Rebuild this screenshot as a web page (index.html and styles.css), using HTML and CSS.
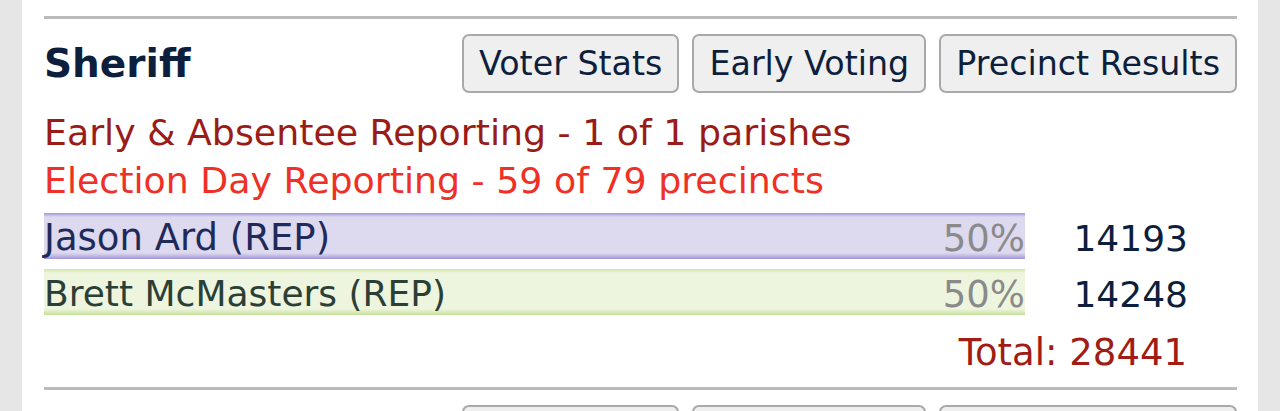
FILE: index.html
```html
<!DOCTYPE html>
<html lang="en">
<head>
<meta charset="utf-8">
<title>Sheriff</title>
<link rel="stylesheet" href="styles.css">
</head>
<body>
<div class="page">
  <section class="race">
    <div class="race-head">
      <h2 class="race-title">Sheriff</h2>
      <div class="race-buttons">
        <button class="btn">Voter Stats</button>
        <button class="btn">Early Voting</button>
        <button class="btn">Precinct Results</button>
      </div>
    </div>
    <div class="reporting early">Early &amp; Absentee Reporting - 1 of 1 parishes</div>
    <div class="reporting eday">Election Day Reporting - 59 of 79 precincts</div>
    <div class="results">
      <div class="bar bar-purple">
        <span class="cand">Jason Ard (REP)</span>
        <span class="pct">50%</span>
      </div>
      <div class="votes">14193</div>
      <div class="bar bar-green">
        <span class="cand">Brett McMasters (REP)</span>
        <span class="pct">50%</span>
      </div>
      <div class="votes">14248</div>
      <div class="total">Total: 28441</div>
    </div>
  </section>
  <section class="race">
    <div class="race-head">
      <h2 class="race-title"></h2>
      <div class="race-buttons">
        <button class="btn">Voter Stats</button>
        <button class="btn">Early Voting</button>
        <button class="btn">Precinct Results</button>
      </div>
    </div>
  </section>
</div>
</body>
</html>
```
FILE: styles.css
```css
html, body {
  margin: 0;
  padding: 0;
  background: #e6e6e6;
  height: 100%;
  overflow: hidden;
}
body {
  font-family: "DejaVu Sans", Verdana, sans-serif;
}
.page {
  margin: 0 22px;
  background: #ffffff;
  padding: 16px 21px 0 22px;
  min-height: 100%;
  box-sizing: border-box;
}
.race {
  border-top: 3px solid #bbbbbb;
}
.race-head {
  display: flex;
  align-items: center;
  justify-content: space-between;
  padding-top: 15px;
  height: 59px;
}
.race-title {
  margin: 0;
  font-size: 39px;
  font-weight: bold;
  color: #0d1f3c;
}
.race-buttons {
  display: flex;
  gap: 13px;
}
.btn {
  font-family: "DejaVu Sans", Verdana, sans-serif;
  font-size: 33.3px;
  color: #0d1f3c;
  background: #efefef;
  border: 2px solid #a9a9a9;
  border-radius: 7px;
  height: 59px;
  padding: 0 15px;
  line-height: 1;
}
.reporting {
  font-size: 36.3px;
  line-height: 48px;
}
.reporting.early {
  margin-top: 16px;
  color: #9b1c17;
}
.reporting.eday {
  color: #ee3027;
}
.results {
  display: grid;
  grid-template-columns: 981px 163px;
  row-gap: 10px;
  margin-top: 8px;
  padding-bottom: 6px;
  font-size: 36px;
}
.bar {
  display: flex;
  justify-content: space-between;
  align-items: center;
  height: 46px;
  box-sizing: border-box;
}
.bar-purple {
  color: #1e2a5a;
  background: linear-gradient(to bottom, #a395d9 0, #ddd9ef 4px, #ddd9ef 40px, #a395d9 46px);
}
.bar-green {
  color: #2b3f36;
  background: linear-gradient(to bottom, #cfe6a8 0, #eef5de 4px, #eef5de 40px, #c4df98 46px);
}
.cand {
  line-height: 46px;
  padding-top: 4px;
}
.bar-purple .cand {
  font-size: 37px;
}
.pct {
  color: #8a8a8a;
  font-size: 37px;
  padding-top: 4px;
}
.votes {
  text-align: right;
  color: #0d1f3c;
  align-self: center;
  padding-top: 4px;
}
.total {
  grid-column: 1 / 3;
  text-align: right;
  color: #a01c14;
  line-height: 56px;
  font-size: 37px;
  padding-right: 1px;
}
```
